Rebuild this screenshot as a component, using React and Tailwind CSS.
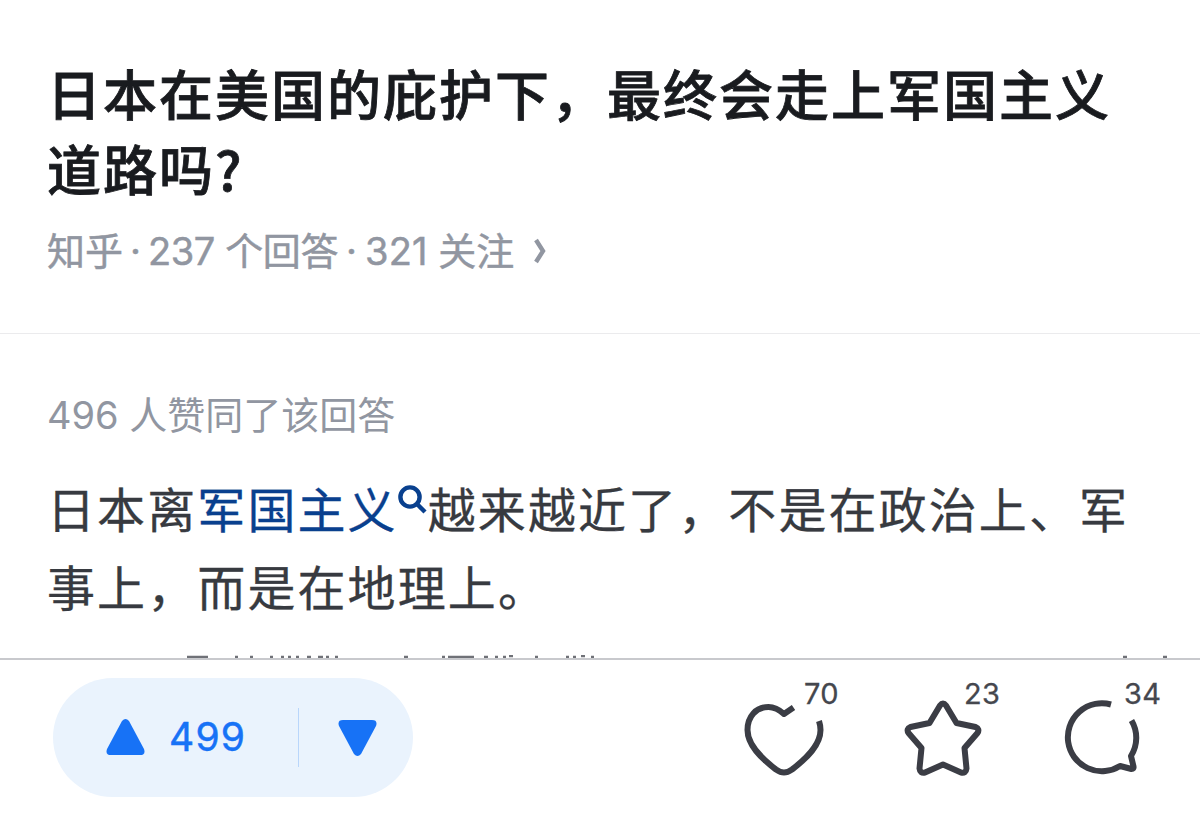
import React from 'react';

function Search() {
  return (
    <svg className="inline-block w-[30px] h-[30px] align-[13px]" viewBox="0 0 30 30" fill="none" stroke="currentColor" strokeWidth="4.4">
      <circle cx="12" cy="12" r="9.6" />
      <path d="M19 19L27 27" />
    </svg>
  );
}

function Heart() {
  return (
    <svg className="w-[84px] h-[84px]" viewBox="742 697 84 84" fill="none" stroke="currentColor" strokeWidth="6" strokeLinejoin="round">
      <path d="M793.500 707.500L784 714C779 709.500 774 707 768.500 707C756 707 747.500 716.500 747.500 730C747.500 745 761 758 776 769.500C782 773.500 786 773.500 792 769.500C807 758 820.500 745 820.500 730C820.500 726.500 820 724 819 721" />
    </svg>
  );
}

function Star() {
  return (
    <svg className="w-[84px] h-[84px]" viewBox="902 697 84 84" fill="none" stroke="currentColor" strokeWidth="6" strokeLinejoin="round">
      <path d="M940 705.500Q943 701.500 946 705.500L956.500 723L975.500 727Q980 729 977.500 733L964.500 748L966.500 768.500Q966 773.500 961 772.500L943 764.500L925 772.500Q920 773.500 919.500 768.500L921.500 748L908.500 733Q906 729 910.500 727L929.500 723Z" />
    </svg>
  );
}

function Comment() {
  return (
    <svg className="w-[84px] h-[84px]" viewBox="1061.500 697 84 84" fill="none" stroke="currentColor" strokeWidth="6" strokeLinejoin="round">
      <path d="M1110.500 704.500A34 34 0 1 0 1119.500 766L1131 769Q1133.500 769 1133 766.500L1130.500 756A34 34 0 0 0 1131 720.500" />
    </svg>
  );
}

// top edge of the next line, hidden behind the bottom bar
function NextLine() {
  return (
    <svg className="w-[1200px] h-[3px] shrink-0" viewBox="0 655 1200 3" fill="none" stroke="#6f7177" strokeWidth="2.4">
      <path d="M187 657H208M235 657H238M250 657H253M270 657H273M281 657H284M288 657H291M296 657H299M307 657H311M318 657H323M326 657H329M335 657H338M404 657H408M442 657H445M448 657H474M484 657H488M495 657H498M503 657H506M509 656H513M535 657H538M566 657H569M573 657H576M581 656H585M591 657H594M1123 657H1127M1163 657H1167" />
    </svg>
  );
}

function Action({ icon, count }) {
  return (
    <button className="relative w-[84px] h-[84px] text-[#3b3d45]">
      {icon}
      <span className="absolute left-[62px] -top-[19px] text-[29px] leading-[32px] tracking-[0.3px] text-[#45474e] [-webkit-text-stroke:0.3px]">{count}</span>
    </button>
  );
}

export default function App() {
  return (
    <div className="flex flex-col w-[1200px] h-[839px] overflow-hidden bg-white font-['Inter','Noto_Sans_CJK_SC',sans-serif]">
      <header className="h-[334px] shrink-0 pl-[47px] pt-[55px] border-b border-[#ebebed]">
        <h1 className="font-['Noto_Sans_CJK_SC',sans-serif] text-[54px] leading-[75px] font-medium tracking-[2px] text-[#191b1f] whitespace-nowrap [-webkit-text-stroke:0.8px]">
          日本在美国的庇护下，最终会走上军国主义
          <br />
          道路吗?
        </h1>
        <p className="mt-[20px] flex items-center text-[38px] leading-[52px] text-[#9196a1] whitespace-pre [-webkit-text-stroke:0.5px]">
          <span>知乎</span>
          <span className="w-[25px] text-center">·</span>
          <span className="tracking-[-0.4px]">237 个回答</span>
          <span className="w-[27px] text-center">·</span>
          <span className="tracking-[0.1px]">321 关注</span>
          <svg className="ml-5 w-[14px] h-[26px]" viewBox="0 0 14 26" fill="none" stroke="currentColor" strokeWidth="4.4">
            <path d="M2 2L9 13L2 24" />
          </svg>
        </p>
      </header>
      <main className="flex flex-col h-[324px] shrink-0 pt-[55px]">
        <p className="pl-[47px] text-[38px] leading-[52px] text-[#9196a1]">496 人赞同了该回答</p>
        <p className="mt-[27px] pl-[47px] font-['Noto_Sans_CJK_SC',sans-serif] text-[48px] leading-[78px] tracking-[2.1px] text-[#373a40] whitespace-nowrap [-webkit-text-stroke:0.3px]">
          日本离<a className="text-[#09408e]">军国主义<Search /></a>越来越近了，不是在政治上、军
          <br />
          事上，而是在地理上。
        </p>
        <div className="mt-auto flex">
          <NextLine />
        </div>
      </main>
      <footer className="flex grow items-start border-t-2 border-[#c8c9cd] pl-[53px] pt-[18px]">
        <div className="flex items-center w-[360px] h-[119px] rounded-[60px] bg-[#eaf3fd] pl-[53px] text-[#1772f6]">
          <svg className="w-[39px] h-[36px] -mt-[2px]" viewBox="0 0 39 36" fill="currentColor">
            <path d="M16 2Q19.500-2 23 2L38 30Q40 36 34 36H5Q-1 36 1 30Z" />
          </svg>
          <span className="ml-6 w-[77px] text-[39px] tracking-[1.2px] [-webkit-text-stroke:0.5px]">499</span>
          <span className="ml-[52px] w-px h-[59px] bg-[#b9d6fb]" />
          <svg className="ml-[39px] w-[39px] h-[36px]" viewBox="0 0 39 36" fill="currentColor">
            <path d="M16 34Q19.500 38 23 34L38 6Q40 0 34 0H5Q-1 0 1 6Z" />
          </svg>
        </div>
        <div className="ml-[329px] mt-[19px] flex gap-[76px]">
          <Action icon={<Heart />} count={70} />
          <Action icon={<Star />} count={23} />
          <Action icon={<Comment />} count={34} />
        </div>
      </footer>
    </div>
  );
}
